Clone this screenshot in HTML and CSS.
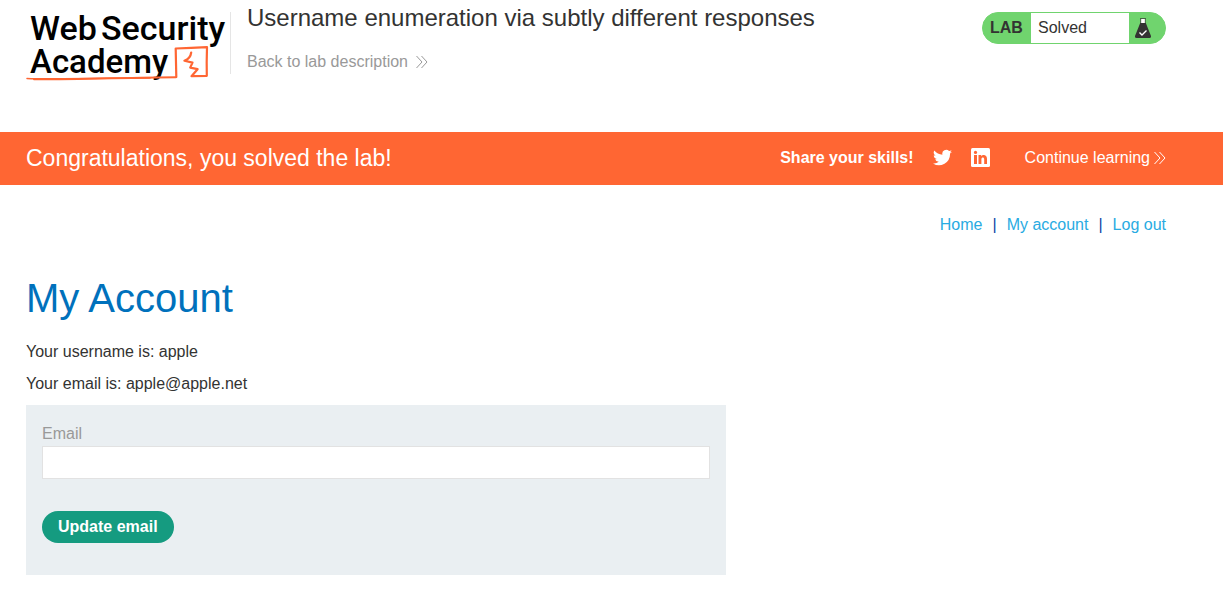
FILE: index.html
```html
<!DOCTYPE html>
<html lang="en">
<head>
<meta charset="utf-8">
<title>Username enumeration via subtly different responses</title>
<link rel="stylesheet" href="styles.css">
</head>
<body>
<header class="lab-header">
  <a class="logo" href="#" aria-label="Web Security Academy">
    <svg width="204" height="84" viewBox="26 0 204 84">
      <g class="logo-text">
        <text x="30" y="40">Web</text>
        <text x="101" y="40">Security</text>
        <text class="logo-second" x="30" y="73">Academy</text>
      </g>
      <g fill="none" stroke="#ff6633" stroke-linecap="round" stroke-linejoin="round">
        <path stroke-width="1.500" d="M27 78.500C50 79.500 120 78 150 78"/>
        <path stroke-width="2" d="M34 79.300C75 79.500 130 77.500 176 77.200"/>
        <path stroke-width="2.200" d="M176.300 77L175.700 48.500Q191 48 207 47.200Q206.500 62 206.800 75.800L191.500 76.200L197.600 69.200L190.200 67.600L192.500 62.600L184.400 60.800Q190.500 58.500 191.200 52.500"/>
      </g>
    </svg>
  </a>
  <div class="title">
    <h2>Username enumeration via subtly different responses</h2>
    <a class="back" href="#">Back to lab description
      <svg width="12" height="14" viewBox="0 0 12 14"><path d="M.5 1L6 7L.500 13M5.500 1L11 7L5.500 13"/></svg>
    </a>
  </div>
  <div class="status">
    <span class="status-lab">LAB</span>
    <span class="status-text">Solved</span>
    <span class="status-icon">
      <svg width="16" height="20" viewBox="0 0 16 20">
        <path fill="#fff" d="M6 1H10V6H6Z"/>
        <path fill="none" stroke="#333332" stroke-width=".7" d="M5 .5H11M5.700 1V6M10.300 1V6"/>
        <path fill="#333332" d="M5.200 5H10.800L16 18Q16.300 20 14.500 20H1.500Q-.3 20 0 18Z"/>
        <path fill="none" stroke="#fff" stroke-width="1.400" d="M4.500 14.500L7 17L11.500 12.500"/>
      </svg>
    </span>
  </div>
</header>
<section class="notice">
  <p class="congrats">Congratulations, you solved the lab!</p>
  <strong>Share your skills!</strong>
  <a class="share" href="#" aria-label="Twitter">
    <svg width="19" height="19" viewBox="0 0 24 24" fill="#fff"><path d="M24 4.600a10 10 0 0 1-2.800.8 4.900 4.900 0 0 0 2.200-2.700 10 10 0 0 1-3.100 1.200 4.900 4.900 0 0 0-8.400 4.500A14 14 0 0 1 1.700 3.200a4.900 4.900 0 0 0 1.500 6.500 4.900 4.900 0 0 1-2.200-.6 4.900 4.900 0 0 0 3.900 4.900 4.900 4.900 0 0 1-2.200.1 4.900 4.900 0 0 0 4.600 3.400A9.900 9.900 0 0 1 0 19.500 14 14 0 0 0 21.500 7.100 10 10 0 0 0 24 4.600Z"/></svg>
  </a>
  <a class="share" href="#" aria-label="LinkedIn">
    <svg width="19" height="19" viewBox="0 0 19 19"><rect width="19" height="19" rx="1.500" fill="#fff"/><g fill="#ff6633"><circle cx="4.500" cy="4.400" r="1.600"/><path d="M3 7H6V16H3ZM7.500 7H10.200V8.300C11.500 6.200 16 6.200 16 10.700V16H13.200V11.300C13.200 8.700 10.400 8.800 10.400 11.300V16H7.500Z"/></g></svg>
  </a>
  <a class="continue" href="#">Continue learning
    <svg width="12" height="14" viewBox="0 0 12 14"><path d="M.5 1L6 7L.500 13M5.500 1L11 7L5.500 13"/></svg>
  </a>
</section>
<main>
  <nav class="links">
    <a href="#">Home</a><span>|</span><a href="#">My account</a><span>|</span><a href="#">Log out</a>
  </nav>
  <h1>My Account</h1>
  <p>Your username is: apple</p>
  <p>Your email is: apple@apple.net</p>
  <form class="email-form">
    <label for="email">Email</label>
    <input id="email" type="email" name="email">
    <button type="submit">Update email</button>
  </form>
</main>
</body>
</html>
```
FILE: styles.css
```css
* { box-sizing: border-box; }
body {
  margin: 0;
  background: #fff;
  color: #333332;
  font: 16px/20px "Liberation Sans", Arial, sans-serif;
}
a { text-decoration: none; }
svg { display: block; }
h1, h2, p { margin: 0; font-weight: 400; }
.lab-header {
  display: flex;
  align-items: flex-start;
  padding: 0 57px 48px 26px;
}
.logo-text {
  font: 500 34px Roboto, sans-serif;
  fill: #000;
}
.logo-second { font-size: 33px; }
.title {
  flex: 1;
  height: 62px;
  margin-top: 12px;
  padding-left: 16px;
  border-left: 1px solid #e5e5e5;
}
.title h2 {
  margin: -8px 0 20px;
  font-size: 24px;
  line-height: 28px;
}
.back, .continue { display: flex; align-items: center; }
.back { gap: 8px; color: #999; }
.back svg, .continue svg { fill: none; stroke: currentColor; }
.status {
  display: flex;
  width: 184px;
  height: 32px;
  margin-top: 12px;
  border: 1px solid #70d46e;
  border-radius: 16px;
  background: #70d46e;
  line-height: 30px;
}
.status-lab { width: 48px; padding-left: 7px; font-weight: 700; }
.status-text { flex: 1; padding-left: 7px; background: #fff; }
.status-icon { width: 36px; padding: 5px 6px; }
.notice {
  display: flex;
  align-items: center;
  height: 53px;
  padding: 0 57px 2px 26px;
  background: #ff6633;
  color: #fff;
}
.congrats { flex: 1; font-size: 23px; line-height: 28px; }
.share { margin-left: 19px; }
.continue { gap: 4px; margin-left: 35px; color: #fff; }
main { padding: 30px 57px 14px 26px; }
.links { display: flex; justify-content: flex-end; gap: 10px; color: #0b45a6; }
.links a { color: #29abe2; }
h1 {
  margin: 39px 0 14px;
  color: #0071bc;
  font-size: 40px;
  line-height: 48px;
}
main p { padding: 6px 0; }
main p + p { margin-bottom: 5px; }
.email-form {
  max-width: 700px;
  padding: 19px 16px 32px;
  background: #eaeff2;
}
.email-form label { display: block; margin-bottom: 2px; color: #999; }
.email-form input {
  display: block;
  width: 100%;
  height: 33px;
  padding: 4px 8px;
  border: 1px solid #e2e2e2;
  background: #fff;
  font: inherit;
}
.email-form button {
  display: block;
  height: 32px;
  margin-top: 32px;
  padding: 0 16px;
  border: 0;
  border-radius: 16px;
  background: #159b80;
  color: #fff;
  font: inherit;
  font-weight: 700;
}
```
